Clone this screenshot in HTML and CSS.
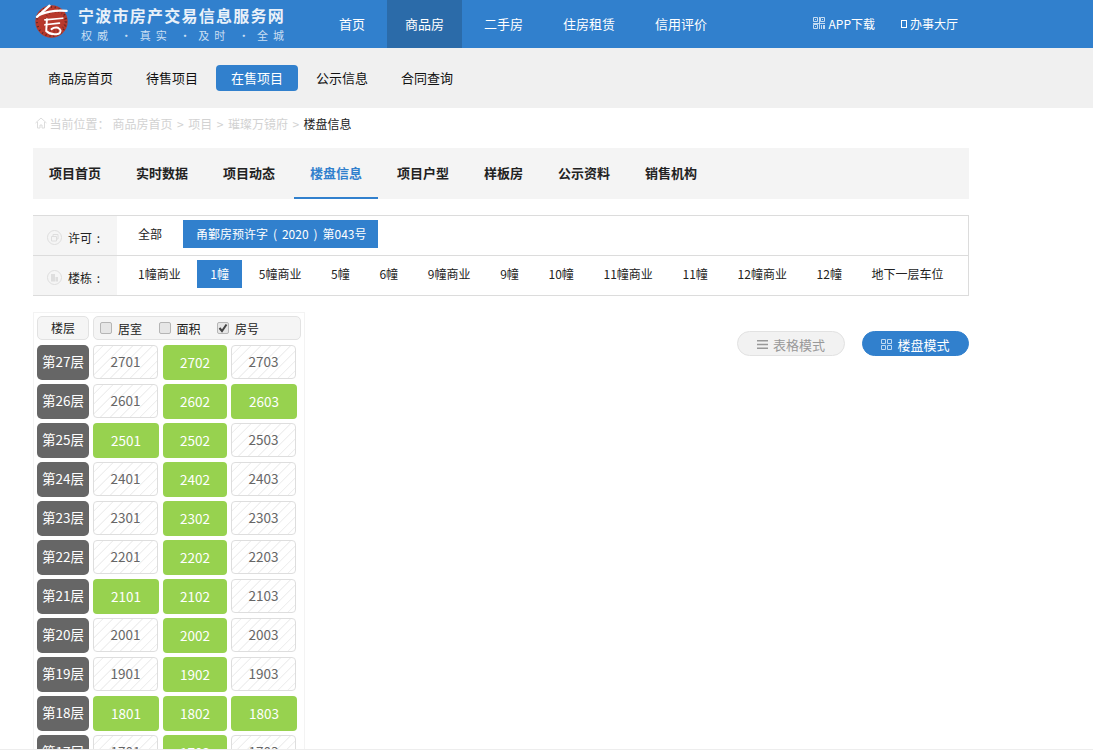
FILE: index.html
```html
<!DOCTYPE html>
<html lang="zh-CN">
<head>
    <meta charset="UTF-8">
    <title>宁波市房产交易信息服务网</title>
    <link rel="stylesheet" href="styles.css">
</head>
<body>
    <!-- Top bar -->
    <header class="topbar">
        <div class="brand">
            <svg class="brand-logo" viewBox="0 0 100 106" width="33" height="35">
                <circle cx="50" cy="53" r="49" fill="#b8392c"/>
                <circle cx="50" cy="53" r="44" fill="none" stroke="#5a2622" stroke-width="6" stroke-dasharray="3 9"/>
                <circle cx="62" cy="52" r="30" fill="none" stroke="#7a2a24" stroke-width="7" stroke-dasharray="2 8"/>
                <g fill="none" stroke="#fff" stroke-linecap="round">
                    <path d="M6 39 L44 5" stroke-width="7"/>
                    <path d="M14 32 Q55 16 96 21" stroke-width="7"/>
                    <path d="M30 48 L84 43" stroke-width="5"/>
                    <path d="M30 63 L74 58" stroke-width="5"/>
                    <path d="M36 46 L34 82 Q48 96 72 90 Q84 80 70 72 Q58 70 50 76" stroke-width="6"/>
                </g>
            </svg>
            <div class="brand-text">
                <div class="brand-name">宁波市房产交易信息服务网</div>
                <div class="brand-slogan">
                    <span>权威</span><i>·</i><span>真实</span><i>·</i><span>及时</span><i>·</i><span>全城</span>
                </div>
            </div>
        </div>
        <nav class="main-nav">
            <a>首页</a>
            <a class="active">商品房</a>
            <a>二手房</a>
            <a>住房租赁</a>
            <a>信用评价</a>
        </nav>
        <div class="top-links">
            <a>
                <svg class="qr-icon" viewBox="0 0 12 12" width="12" height="12">
                    <path fill="none" stroke="#c4dcf2" d="M.5.5h4v4h-4zM7.5.5h4v4h-4zM.5 7.5h4v4h-4z"/>
                    <path fill="#c4dcf2" d="M2 2h1v1H2zM9 2h1v1H9zM2 9h1v1H2zM6 0h1v6H6zM0 6h12v1H0zM6 7h1v5H6zM8 8h1v4H8zM10 8h2v4h-2z"/>
                </svg>APP下载
            </a>
            <a><span class="tofu"></span>办事大厅</a>
        </div>
    </header>

    <!-- Second level nav -->
    <div class="sub-nav">
        <a>商品房首页</a>
        <a>待售项目</a>
        <a class="active">在售项目</a>
        <a>公示信息</a>
        <a>合同查询</a>
    </div>

    <div class="wrap">
        <div class="crumbs">
            <svg viewBox="0 0 12 12" width="12" height="12">
                <path fill="none" stroke="#dcdcdc" d="M.5 6 6 1l5.500 5M2.500 5v6h2.500V8h2v3h2.500V5"/>
            </svg>
            <span class="crumbs-lead">当前位置：</span>
            <span>商品房首页</span><span>&gt;</span>
            <span>项目</span><span>&gt;</span>
            <span>璀璨万镜府</span><span>&gt;</span>
            <span class="current">楼盘信息</span>
        </div>

        <div class="tabs">
            <a>项目首页</a>
            <a>实时数据</a>
            <a>项目动态</a>
            <a class="active">楼盘信息</a>
            <a>项目户型</a>
            <a>样板房</a>
            <a>公示资料</a>
            <a>销售机构</a>
        </div>

        <div class="filters">
            <div class="filter-row">
                <div class="filter-label">
                    <svg viewBox="0 0 15 15" width="15" height="15">
                        <circle cx="7.500" cy="7.500" r="7" fill="none" stroke="#dedede"/>
                        <path fill="none" stroke="#dedede" d="M4.500 6.500h5v4.500h-5zM6 6.500V4.500h5v4.500H9.500"/>
                    </svg>
                    <span>许可 :</span>
                </div>
                <div class="filter-items first-row">
                    <a>全部</a>
                    <a class="active licence">甬鄞房预许字 ( 2020 ) 第043号</a>
                </div>
            </div>
            <div class="filter-row">
                <div class="filter-label">
                    <svg viewBox="0 0 15 15" width="15" height="15">
                        <circle cx="7.500" cy="7.500" r="7" fill="none" stroke="#dedede"/>
                        <path fill="#dedede" d="M4 4h4v7.500H4zM8.500 7H11v4.500H8.500z"/>
                    </svg>
                    <span>楼栋 :</span>
                </div>
                <div class="filter-items">
                    <a>1幢商业</a>
                    <a class="active">1幢</a>
                    <a>5幢商业</a>
                    <a>5幢</a>
                    <a>6幢</a>
                    <a>9幢商业</a>
                    <a>9幢</a>
                    <a>10幢</a>
                    <a>11幢商业</a>
                    <a>11幢</a>
                    <a>12幢商业</a>
                    <a>12幢</a>
                    <a>地下一层车位</a>
                </div>
            </div>
        </div>

        <div class="content">
            <div class="panel">
                <div class="panel-head">
                    <div class="head-floor">楼层</div>
                    <div class="head-opts">
                        <label><span class="check"></span>居室</label>
                        <label><span class="check"></span>面积</label>
                        <label>
                            <span class="check">
                                <svg viewBox="0 0 12 12" width="12" height="12">
                                    <path fill="none" stroke="#444" stroke-width="2" d="M2.500 6 5 9l4.500-6.500"/>
                                </svg>
                            </span>房号
                        </label>
                    </div>
                </div>
                <div class="floor"><b>第27层</b><a class="sold">2701</a><a class="free">2702</a><a class="sold">2703</a></div>
                <div class="floor"><b>第26层</b><a class="sold">2601</a><a class="free">2602</a><a class="free">2603</a></div>
                <div class="floor"><b>第25层</b><a class="free">2501</a><a class="free">2502</a><a class="sold">2503</a></div>
                <div class="floor"><b>第24层</b><a class="sold">2401</a><a class="free">2402</a><a class="sold">2403</a></div>
                <div class="floor"><b>第23层</b><a class="sold">2301</a><a class="free">2302</a><a class="sold">2303</a></div>
                <div class="floor"><b>第22层</b><a class="sold">2201</a><a class="free">2202</a><a class="sold">2203</a></div>
                <div class="floor"><b>第21层</b><a class="free">2101</a><a class="free">2102</a><a class="sold">2103</a></div>
                <div class="floor"><b>第20层</b><a class="sold">2001</a><a class="free">2002</a><a class="sold">2003</a></div>
                <div class="floor"><b>第19层</b><a class="sold">1901</a><a class="free">1902</a><a class="sold">1903</a></div>
                <div class="floor"><b>第18层</b><a class="free">1801</a><a class="free">1802</a><a class="free">1803</a></div>
                <div class="floor"><b>第17层</b><a class="sold">1701</a><a class="free">1702</a><a class="sold">1703</a></div>
            </div>

            <div class="modes">
                <a class="mode">
                    <svg viewBox="0 0 11 11" width="11" height="11">
                        <path fill="#999" d="M0 1h11v1.500H0zM0 4.750h11v1.500H0zM0 8.500h11V10H0z"/>
                    </svg>表格模式
                </a>
                <a class="mode active">
                    <svg viewBox="0 0 11 11" width="11" height="11">
                        <path fill="none" stroke="#bcd8f2" d="M.5.500h4v4h-4zM6.500.500h4v4h-4zM.5 6.500h4v4h-4zM6.500 6.500h4v4h-4z"/>
                    </svg>楼盘模式
                </a>
            </div>
        </div>
    </div>

    <div class="page-end"></div>
</body>
</html>
```

FILE: styles.css
```css
* {
    margin: 0;
    padding: 0;
    box-sizing: border-box;
}

html, body {
    height: 100%;
    overflow: hidden;
}

body {
    font-family: "Noto Sans CJK SC", "Noto Sans", sans-serif;
    font-size: 13px;
    color: #222;
    background: #fff;
}

/* Top bar */
.topbar {
    display: flex;
    align-items: stretch;
    height: 48px;
    padding-left: 35px;
    background: #3180cd;
    color: #fff;
}

.brand {
    display: flex;
    align-items: flex-start;
    gap: 10px;
    width: 286px;
    padding-top: 4px;
}

.brand-name {
    font-size: 16px;
    font-weight: 700;
    line-height: 18px;
    letter-spacing: 1.25px;
    margin-top: 2px;
    color: #e9f1f9;
}

.brand-slogan {
    display: flex;
    justify-content: space-between;
    width: 208px;
    margin: 4px 0 0 3px;
    font-size: 11px;
    line-height: 14px;
    letter-spacing: 5px;
    color: #c9dff3;
}

.brand-slogan i {
    font-style: normal;
    letter-spacing: 0;
}

.main-nav {
    display: flex;
    gap: 4px;
}

.main-nav a {
    padding: 0 18px;
    line-height: 48px;
}

.main-nav a.active {
    background: #2b6ba9;
}

.top-links {
    display: flex;
    align-items: center;
    gap: 26px;
    margin-left: auto;
    padding: 0 135px 2px 0;
    font-size: 12px;
}

.top-links a {
    display: flex;
    align-items: center;
}

.qr-icon {
    margin-right: 3px;
}

.tofu {
    width: 6px;
    height: 8px;
    margin: 2px 3px 0 0;
    border: 1px solid #fff;
}

/* Second level nav */
.sub-nav {
    display: flex;
    gap: 3px;
    height: 60px;
    padding: 17px 0 0 33px;
    background: #f0f0f0;
    color: #111;
}

.sub-nav a {
    height: 26px;
    padding: 0 15px;
    line-height: 26px;
    border-radius: 4px;
}

.sub-nav a.active {
    background: #3180cd;
    color: #fff;
}

.wrap {
    width: 936px;
    margin-left: 33px;
}

/* Breadcrumb */
.crumbs {
    display: flex;
    align-items: center;
    gap: 4.5px;
    height: 30px;
    padding-left: 2px;
    font-size: 12px;
    color: #d2d2d2;
}

.crumbs svg {
    margin-right: -2px;
}

.crumbs-lead {
    margin-right: -1.5px;
}

.crumbs .current {
    color: #222;
}

/* Tabs */
.tabs {
    display: flex;
    gap: 3px;
    height: 51px;
    margin-top: 10px;
    background: #f4f4f4;
    font-weight: 700;
}

.tabs a {
    height: 51px;
    padding: 0 16px;
    line-height: 49px;
}

.tabs a.active {
    color: #3180cd;
    border-bottom: 2px solid #3180cd;
}

/* Filters */
.filters {
    margin-top: 16px;
    border: 1px solid #dcdcdc;
    border-left: 0;
    font-size: 12px;
}

.filter-row {
    display: flex;
    height: 39px;
}

.filter-row + .filter-row {
    height: 40px;
    border-top: 1px solid #dcdcdc;
}

.filter-label {
    display: flex;
    align-items: center;
    gap: 6px;
    width: 84px;
    padding: 4px 0 0 14px;
    background: #f5f5f5;
    word-spacing: 2px;
}

.filter-items {
    display: flex;
    gap: 3.7px;
    padding: 4px 0 0 8px;
}

.filter-items.first-row {
    gap: 8px;
}

.filter-items a {
    height: 28px;
    padding: 0 13px;
    line-height: 28px;
}

.filter-items a.active {
    background: #3180cd;
    color: #fff;
}

.filter-items a.licence {
    width: 195px;
    white-space: nowrap;
    word-spacing: 2.250px;
}

/* Floor panel */
.content {
    display: flex;
    justify-content: space-between;
    align-items: flex-start;
    margin-top: 16px;
}

.panel {
    display: flex;
    flex-direction: column;
    gap: 4px;
    width: 272px;
    padding: 3px 3px;
    border: 1px solid #f3f3f3;
}

.panel-head {
    display: flex;
    gap: 4px;
    height: 24px;
    margin-bottom: 1px;
}

.head-floor, .head-opts {
    background: #f5f5f5;
    border: 1px solid #e2e2e2;
    border-radius: 5px;
}

.head-floor {
    width: 52px;
    text-align: center;
    font-size: 12px;
    line-height: 22px;
}

.head-opts {
    display: flex;
    width: 208px;
    padding-left: 6px;
    font-size: 12px;
}

.head-opts label {
    display: flex;
    align-items: center;
    gap: 6px;
    width: 58.500px;
}

.check {
    width: 12px;
    height: 12px;
    background: #e6e6e6;
    border: 1px solid #b5b5b5;
    border-radius: 2px;
    line-height: 0;
}

.check svg {
    margin: -1px;
}

.floor {
    display: grid;
    grid-template-columns: 52px 66px 64px 66px;
    gap: 4px;
    height: 35px;
    flex-shrink: 0;
    color: #fff;
    font-size: 13.500px;
}

.floor b, .floor a {
    display: block;
    height: 35px;
    text-align: center;
    border-radius: 4px;
    font-weight: 400;
    line-height: 33px;
}

.floor b {
    background: #666;
    border-radius: 5px;
}

.floor .free {
    background: #97d24f;
    line-height: 34px;
}

.floor .sold {
    width: 65px;
    height: 34px;
    line-height: 30px;
    color: #666;
    border: 1px solid #dedede;
    background: repeating-linear-gradient(135deg, #fff 0, #fff 5.500px, #efefef 6px, #efefef 6.500px, #fff 7px);
}

.floor .sold:nth-child(3) {
    width: 64px;
}

/* Mode switch */
.modes {
    display: flex;
    gap: 17px;
    margin-top: 19px;
}

.mode {
    display: flex;
    align-items: center;
    justify-content: center;
    gap: 5px;
    width: 108px;
    height: 25px;
    padding-top: 1px;
    background: #f2f2f2;
    border: 1px solid #e2e2e2;
    border-radius: 13px;
    color: #999;
}

.mode.active {
    width: 107px;
    background: #3180cd;
    border-color: #3180cd;
    color: #fff;
}

/* White strip closing the page at the window bottom */
.page-end {
    position: fixed;
    left: 0;
    right: 0;
    bottom: 0;
    height: 6px;
    background: #fff;
    border-top: 1px solid #ededed;
}
```
